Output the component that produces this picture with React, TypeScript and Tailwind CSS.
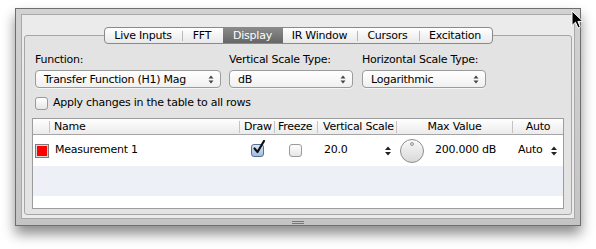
import React from 'react';

const font = { fontFamily: '"Lucida Grande", "DejaVu Sans", sans-serif' };

const Arrows = ({ className = '' }: { className?: string }) => (
  <svg width="6" height="10" viewBox="0 0 6 10" className={className}>
    <path d="M0 4 L3 0.5 L6 4 Z" fill="#222" />
    <path d="M0 6 L3 9.5 L6 6 Z" fill="#222" />
  </svg>
);

const Select = ({ label, width }: { label: string; width: string }) => (
  <div
    className={`flex items-center justify-between h-[18px] rounded-[4px] border border-[#9b9b9b] bg-gradient-to-b from-white to-[#f0f0f0] pl-[8px] pr-[6px] shadow-[0_1px_0_rgba(255,255,255,0.6)] ${width}`}
  >
    <span className="text-[11px] text-black leading-none">{label}</span>
    <svg width="6" height="9" viewBox="0 0 6 9">
      <path d="M0.5 3.5 L3 0.5 L5.5 3.5 Z" fill="#444" />
      <path d="M0.5 5.5 L3 8.5 L5.5 5.5 Z" fill="#444" />
    </svg>
  </div>
);

const Checkbox = ({ checked = false }: { checked?: boolean }) => (
  <div className="relative w-[13px] h-[13px]">
    <div
      className={`w-[13px] h-[13px] rounded-[3px] border ${
        checked
          ? 'border-[#5a6f8f] bg-gradient-to-b from-[#dbe7f7] to-[#9ebde6]'
          : 'border-[#9a9a9a] bg-gradient-to-b from-white to-[#e6e6e6]'
      }`}
    />
    {checked && (
      <svg width="14" height="15" viewBox="0 0 14 15" className="absolute left-[1px] top-[-4px]">
        <path d="M2.5 8.5 L5.5 12 L12 1" stroke="#111" strokeWidth="2.2" fill="none" strokeLinecap="round" strokeLinejoin="round" />
      </svg>
    )}
  </div>
);

const Divider = () => <div className="w-px h-[12px] shrink-0 bg-[#c4c4c4]" />;

const tabs = ['Live Inputs', 'FFT', 'Display', 'IR Window', 'Cursors', 'Excitation'];
const tabWidths = ['w-[77px]', 'w-[41px]', 'w-[60px]', 'w-[74px]', 'w-[62px]', 'w-[73px]'];

export default function App() {
  return (
    <div className="w-[596px] h-[249px] bg-white relative overflow-hidden tracking-[-0.25px]" style={font}>
      <div className="pt-[8px] pl-[15px]">
        <div className="relative w-[566px] h-[218px] border border-[#6e6e6e] bg-gradient-to-b from-[#d2d2d2] to-[#c4c4c4] pt-[5px] px-[5px] pb-[6px] shadow-[0_8px_12px_rgba(0,0,0,0.45)]">
          <div className="h-full border border-[#a9a9a9] bg-[#ebebeb] pt-[12px] px-[2px] pb-[3px] flex flex-col">
            {/* tabs */}
            <div className="relative z-10 flex justify-center">
              <div className="flex h-[17px] rounded-[4px] border border-[#8a8a8a] bg-gradient-to-b from-white to-[#e9e9e9] overflow-hidden">
                {tabs.map((t, i) => (
                  <div
                    key={t}
                    className={`flex items-center justify-center text-[11px] leading-none relative whitespace-nowrap ${tabWidths[i]} ${
                      t === 'Display'
                        ? 'bg-gradient-to-b from-[#8a8a8a] to-[#666] text-white'
                        : 'text-black'
                    }`}
                  >
                    {i > 0 && tabs[i - 1] !== 'Display' && t !== 'Display' && (
                      <div className="absolute left-0 top-[3px] w-px h-[10px] bg-[#b8b8b8]" />
                    )}
                    {t}
                  </div>
                ))}
              </div>
            </div>
            {/* tab box */}
            <div className="-mt-[9px] flex-1 rounded-[3px] border border-[#a6a6a6] bg-[#e3e3e3] pt-[17px] px-[7px] pb-[5px] flex flex-col">
              <div className="flex gap-[8px] pl-[3px]">
                <div className="flex flex-col gap-[3px]">
                  <span className="text-[11px] leading-[14px] text-black">Function:</span>
                  <Select label="Transfer Function (H1) Mag" width="w-[186px]" />
                </div>
                <div className="flex flex-col gap-[3px]">
                  <span className="text-[11px] leading-[14px] text-black">Vertical Scale Type:</span>
                  <Select label="dB" width="w-[124px]" />
                </div>
                <div className="flex flex-col gap-[3px] ml-[1px]">
                  <span className="text-[11px] leading-[14px] text-black">Horizontal Scale Type:</span>
                  <Select label="Logarithmic" width="w-[124px]" />
                </div>
              </div>
              <div className="flex items-center gap-[5px] pl-[3px] mt-[8px]">
                <Checkbox />
                <span className="text-[11px] leading-[14px] text-black">Apply changes in the table to all rows</span>
              </div>
              {/* table */}
              <div className="mt-[8px] flex-1 border border-[#9c9c9c] bg-white flex flex-col">
                <div className="grid grid-cols-[16px_190px_35px_43px_79px_116px_1fr] grid-rows-[15px] h-[16px] border-b border-[#a5a5a5] bg-gradient-to-b from-white to-[#ebebeb] text-[11px] leading-[14px] text-black whitespace-nowrap">
                  <div />
                  <div className="flex items-center gap-[4px]"><Divider /><span>Name</span></div>
                  <div className="flex items-center gap-[4px]"><Divider /><span>Draw</span></div>
                  <div className="flex items-center gap-[3px]"><Divider /><span>Freeze</span></div>
                  <div className="flex items-center gap-[5px]"><Divider /><span>Vertical Scale</span></div>
                  <div className="flex items-center"><Divider /><span className="flex-1 text-center">Max Value</span></div>
                  <div className="flex items-center"><Divider /><span className="flex-1 text-center">Auto</span></div>
                </div>
                <div className="grid grid-cols-[16px_190px_35px_43px_79px_116px_1fr] h-[31px] items-center text-[11px] text-black whitespace-nowrap">
                  <div className="flex justify-end">
                    <div className="w-[14px] h-[14px] border border-[#7c7c7c] bg-[#f00] shadow-[inset_0_0_0_1px_#d8d8d8]" />
                  </div>
                  <div className="pl-[6px]">Measurement 1</div>
                  <div className="flex justify-center pl-[1px]"><Checkbox checked /></div>
                  <div className="flex justify-center"><Checkbox /></div>
                  <div className="flex items-center justify-between pl-[7px] pr-[5px]">
                    <span>20.0</span>
                    <Arrows />
                  </div>
                  <div className="flex items-center pl-[4px] gap-[11px]">
                    <div className="relative w-[24px] h-[24px] rounded-full border border-[#8c8c8c] bg-gradient-to-b from-[#f8f8f8] to-[#d9d9d9] shadow-[inset_0_1px_1px_rgba(255,255,255,0.9)]">
                      <div className="absolute left-[9px] top-[2px] w-[4px] h-[4px] rounded-full border border-[#999] bg-[#ddd]" />
                    </div>
                    <span>200.000 dB</span>
                  </div>
                  <div className="flex items-center justify-between pl-[6px] pr-[6px]">
                    <span>Auto</span>
                    <Arrows />
                  </div>
                </div>
                <div className="h-[30px] bg-[#edf1f7]" />
                <div className="flex-1" />
              </div>
            </div>
          </div>
          <div className="absolute left-1/2 -translate-x-1/2 bottom-[1px] w-[12px] h-[3px] border-y border-[#777]" />
        </div>
      </div>
      {/* mouse cursor */}
      <svg width="14" height="20" viewBox="0 0 14 20" className="absolute left-[571px] top-[10px]">
        <path d="M1 1 L1 15.5 L4.5 12.2 L7 18 L9.3 17 L6.9 11.4 L11.8 11.4 Z" fill="#000" stroke="#fff" strokeWidth="1" strokeLinejoin="round" />
      </svg>
    </div>
  );
}
